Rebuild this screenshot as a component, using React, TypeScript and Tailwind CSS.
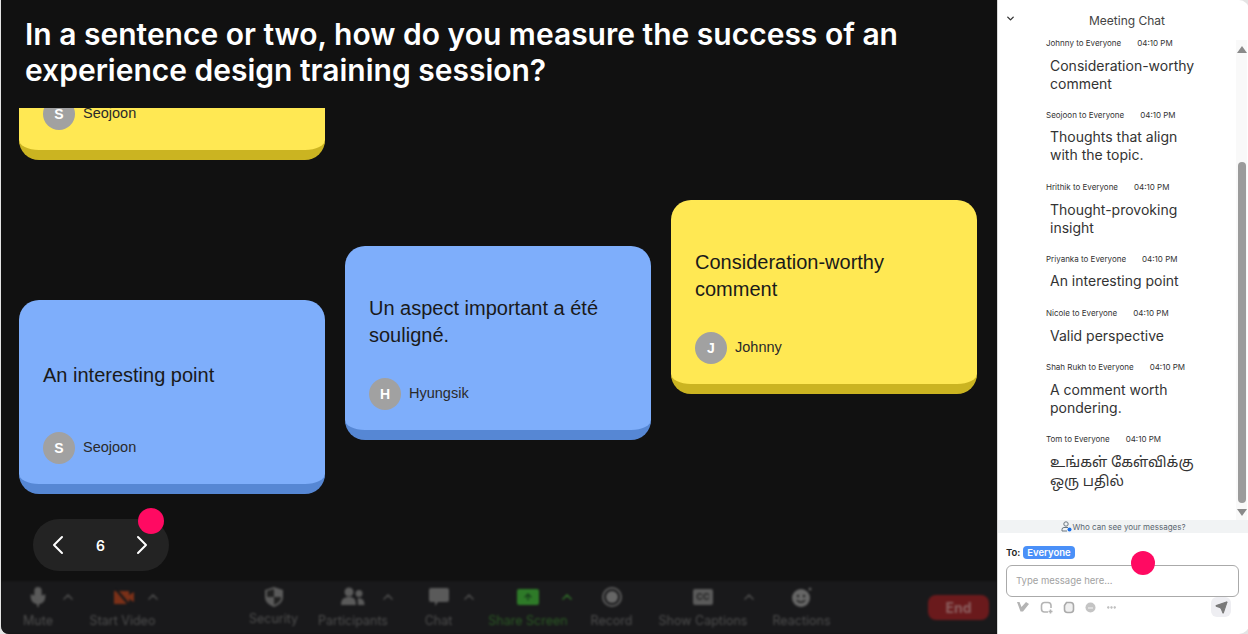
import React from 'react';
import { ChevronDown, ChevronLeft, ChevronRight, ChevronUp, Mic, Send, MoreHorizontal, ArrowUp } from 'lucide-react';

const font = "font-['Inter',sans-serif]";

const Card = ({ text, name, color, className = '', textClass = 'pt-[20px]' }: { text: string; name: string; color: 'blue' | 'yellow'; className?: string; textClass?: string }) => (
  <div
    className={`w-[306px] h-[194px] shrink-0 rounded-[20px] border-b-[10px] px-6 flex flex-col font-['Liberation_Sans',sans-serif] ${
      color === 'blue' ? 'bg-[#7eaefb] border-[#5687d4]' : 'bg-[#ffe853] border-[#cbb421]'
    } ${className}`}
  >
    <div className={`flex-1 flex items-center text-[20px] leading-[27px] text-[#1a1a1a] ${textClass}`}>{text}</div>
    <div className="flex items-center gap-[8px] mb-[20px]">
      <div className="w-8 h-8 rounded-full bg-[#a1a1a1] text-white font-bold text-[14px] flex items-center justify-center">{name[0]}</div>
      <span className="text-[14.5px] text-[#2a2a2a] -mt-[1px]">{name}</span>
    </div>
  </div>
);

const Tool = ({ icon, label, caret = '', className = '', labelClass = 'mt-[3px]', green }: { icon: React.ReactNode; label: string; caret?: string; className?: string; labelClass?: string; green?: boolean }) => (
  <div className={`relative flex flex-col items-center ${className}`}>
    <div className="h-[26px] flex items-center justify-center">{icon}</div>
    <span className={`text-[12.5px] leading-[16px] whitespace-nowrap ${labelClass} ${green ? 'text-[#2b5a24]' : 'text-[#4e4e4e]'}`}>{label}</span>
    {caret && <ChevronUp size={16} strokeWidth={2.5} className={`absolute top-[5px] ${caret} ${green ? 'text-[#2f6a28]' : 'text-[#4a4a4a]'}`} />}
  </div>
);

const messages = [
  { from: 'Johnny', text: 'Consideration-worthy comment', spacing: 'gap-[9px]' },
  { from: 'Seojoon', text: 'Thoughts that align with the topic.', spacing: 'gap-[8px] mb-[1px]' },
  { from: 'Hrithik', text: 'Thought-provoking insight', spacing: 'gap-[9px]' },
  { from: 'Priyanka', text: 'An interesting point', spacing: 'gap-[8px] mb-[1px]' },
  { from: 'Nicole', text: 'Valid perspective', spacing: 'gap-[9px]' },
  { from: 'Shah Rukh', text: 'A comment worth pondering.', spacing: 'gap-[9px]' },
];

const SmallIcons = () => (
  <>
    <svg width="14" height="12" viewBox="0 0 14 12" fill="#b4b4b4"><path d="M1 1h2.500l2 5L10 1l3 2-6 7.500H4.500z" /></svg>
    <svg width="13" height="13" viewBox="0 0 13 13" fill="none" stroke="#b4b4b4" strokeWidth="1.600"><path d="M8 11H4.500A3 3 0 0 1 1.500 8V4.500a3 3 0 0 1 3-3H8a3 3 0 0 1 3 3V7" /><path d="M10.500 8.500v4M8.500 10.500h4" /></svg>
    <svg width="13" height="13" viewBox="0 0 13 13" fill="#f0f0f0" stroke="#aaaaaa" strokeWidth="1.600"><path d="M4.500 1.500h4a3 3 0 0 1 3 3v4a3 3 0 0 1-3 3h-3a3 3 0 0 1-3-3v-4z" /></svg>
    <svg width="11" height="11" viewBox="0 0 11 11"><circle cx="5.500" cy="5.500" r="5" fill="#c4c4c4" /><path d="M3 6h5" stroke="#eeeeee" strokeWidth="1.200" /></svg>
    <MoreHorizontal size={11} strokeWidth={3} className="text-[#b4b4b4] ml-[1px]" />
  </>
);

const Chat = () => (
  <aside className={`relative w-[251px] shrink-0 bg-white flex flex-col rounded-r-[10px] ${font}`}>
    <div className="h-[36px] shrink-0 flex items-center pl-[7px] relative">
      <ChevronDown size={11} strokeWidth={3} className="text-[#333]" />
      <span className="absolute left-[91px] top-[13px] text-[12px] leading-[15px] text-[#444]">Meeting Chat</span>
    </div>
    <div className="flex-1 min-h-0 flex overflow-hidden">
      <div className="flex-1 pl-[48px] pr-[40px] pt-[2px] flex flex-col gap-[17px] overflow-hidden">
        {messages.map((m) => (
          <div key={m.from} className={`flex flex-col ${m.spacing}`}>
            <div className="flex gap-[16px] text-[8px] leading-[10px] text-[#333] whitespace-nowrap">
              <span>{m.from} to Everyone</span>
              <span>04:10 PM</span>
            </div>
            <div className="pl-[4px] text-[14px] leading-[18px] text-[#333]">{m.text}</div>
          </div>
        ))}
        <div className="flex flex-col gap-[10px]">
          <div className="flex gap-[16px] text-[8px] leading-[10px] text-[#333] whitespace-nowrap">
            <span>Tom to Everyone</span>
            <span>04:10 PM</span>
          </div>
          <div className="pl-[4px] text-[14.3px] leading-[19px] text-[#333] whitespace-nowrap font-['Noto_Sans_Tamil','Lohit_Tamil','Noto_Sans',sans-serif]">
            உங்கள் கேள்விக்கு<br />ஒரு பதில்
          </div>
        </div>
      </div>
      <div className="w-[11px] mr-[2px] shrink-0 bg-[#f9f9f9] flex flex-col items-center pt-[6px] pb-[4px] mt-[4px]">
        <svg width="10" height="7" viewBox="0 0 10 7" className="shrink-0"><path d="M5 0l5 7H0z" fill="#8a8a8a" /></svg>
        <div className="w-[8px] h-[341px] mt-[109px] rounded-full bg-[#9b9b9b]" />
        <svg width="10" height="7" viewBox="0 0 10 7" className="shrink-0 mt-auto"><path d="M5 7l5-7H0z" fill="#8a8a8a" /></svg>
      </div>
    </div>
    <div className="h-[13px] shrink-0 bg-[#f1f3f4] flex items-center justify-center text-[8px] text-[#5a6670]">
      <svg width="11" height="11" viewBox="0 0 11 11" fill="none" stroke="#6a7680" strokeWidth="1">
        <circle cx="5" cy="3" r="2.200" />
        <path d="M1 10V8.500A2 2 0 0 1 3 6.500h4" />
        <path d="M1 10h5" />
        <circle cx="8.500" cy="8.500" r="2" fill="#1a6fe8" stroke="none" />
      </svg>
      Who can see your messages?
    </div>
    <div className="h-[101px] shrink-0 pl-[8px] pr-[10px] pt-[13px] relative">
      <div className="flex items-center gap-[2px] text-[9.5px] leading-[13px] font-semibold text-[#222]">
        To:
        <span className="ml-[1px] bg-[#4a90f8] text-white rounded-[4px] px-[4px] text-[9.5px]">Everyone</span>
      </div>
      <div className="mt-[6px] h-[32px] border border-[#aaaaaa] rounded-[6px] flex items-center pl-[9px] text-[9.5px] text-[#a2a2a2]">Type message here...</div>
      <div className="flex items-center pl-[10px] gap-[9.500px] h-[20px]">
        <SmallIcons />
        <div className="ml-auto w-[20px] h-[20px] rounded-[6px] bg-[#eeeef2] flex items-center justify-center mr-[8px]">
          <Send size={13} className="text-[#7a7a7a] fill-[#7a7a7a]" />
        </div>
      </div>
      <div className="absolute left-[133px] top-[18px] w-[24px] h-[24px] rounded-full bg-[#ff0a62]" />
    </div>
  </aside>
);

export default function App() {
  return (
    <div className={`w-[1248px] h-[634px] overflow-hidden bg-[#e4e4e4] flex ${font}`}>
      <main className="relative w-[996px] ml-px shrink-0 bg-[#111111] flex flex-col overflow-hidden rounded-bl-[8px]">
        <h1 className="h-[108px] shrink-0 pt-[16px] pl-6 text-[30px] leading-[36px] font-semibold text-white bg-[#111111] z-10">
          In a sentence or two, how do you measure the success of an<br />experience design training session?
        </h1>
        <div className="flex-1 min-h-0 flex gap-5 pl-[18px] overflow-hidden">
          <div className="flex flex-col">
            <Card text="" name="Seojoon" color="yellow" className="-mt-[142px]" />
            <Card text="An interesting point" name="Seojoon" color="blue" className="mt-[140px] h-[193px]" textClass="pt-[18px]" />
          </div>
          <Card text="Un aspect important a été souligné." name="Hyungsik" color="blue" className="mt-[138px]" />
          <Card text="Consideration-worthy comment" name="Johnny" color="yellow" className="mt-[92px]" />
        </div>
        <div className="absolute left-[32px] top-[519px] w-[136px] h-[52px] rounded-full bg-[#232323] flex items-center justify-between pl-[9px] pr-[11px] text-white">
          <ChevronLeft size={32} strokeWidth={1.5} />
          <span className="text-[14px] font-semibold ml-[1px]">6</span>
          <ChevronRight size={32} strokeWidth={1.5} />
          <span className="absolute left-[105px] -top-[11px] w-[26px] h-[26px] rounded-full bg-[#ff0a62]" />
        </div>
        <footer className="h-[53px] shrink-0 bg-[#19191b] z-10 flex items-start pt-[3px] blur-[1.2px]">
          <Tool icon={<Mic size={22} className="text-[#5a5a5a] fill-[#5a5a5a]" />} label="Mute" caret="-right-[25px]" className="ml-[24px] w-[26px]" />
          <Tool
            icon={
              <svg width="24" height="22" viewBox="0 0 24 22">
                <path d="M3 5h15v13H3z" fill="#7a3018" />
                <path d="M18 9l5-3v10l-5-3z" fill="#7a3018" />
                <path d="M3 1l17 20" stroke="#19191b" strokeWidth="2.500" />
              </svg>
            }
            label="Start Video"
            caret="-right-[6px]"
            className="ml-[39px] w-[65px]"
          />
          <Tool
            icon={
              <svg width="20" height="22" viewBox="0 0 20 22">
                <path d="M10 1l9 3v7c0 5-4 8-9 10-5-2-9-5-9-10V4z" fill="#5a5a5a" />
                <path d="M10 3v8H3V5zM10 11h7c0 4-3 6-7 8z" fill="#222" />
              </svg>
            }
            label="Security"
            labelClass="mt-[1px]"
            className="ml-[95px] w-[47px]"
          />
          <Tool
            icon={
              <svg width="24" height="20" viewBox="0 0 24 20" fill="#5a5a5a">
                <circle cx="8" cy="5" r="4.500" />
                <circle cx="18" cy="6.500" r="3.500" />
                <path d="M0 18c0-6 3-8 8-8s7 2 7 8zM16.500 11.500c4-.8 7 1 7 6.500h-6.500c0-3-.2-5-.5-6.500z" />
              </svg>
            }
            label="Participants"
            caret="-right-[8px]"
            className="ml-[21px] w-[70px]"
          />
          <Tool
            icon={
              <svg width="22" height="20" viewBox="0 0 22 20" fill="#5a5a5a">
                <path d="M3 1h16a2 2 0 0 1 2 2v10a2 2 0 0 1-2 2h-9l-3 4v-4H3a2 2 0 0 1-2-2V3a2 2 0 0 1 2-2z" />
              </svg>
            }
            label="Chat"
            caret="-right-[24px]"
            className="ml-[36px] w-[29px]"
          />
          <Tool
            green
            icon={<span className="w-[22px] h-[16px] rounded-[2px] bg-[#2e7a28] flex items-center justify-center"><ArrowUp size={10} strokeWidth={3} className="text-[#14351a]" /></span>}
            label="Share Screen"
            caret="-right-[8px]"
            className="ml-[36px] w-[78px]"
          />
          <Tool
            icon={<span className="w-[20px] h-[20px] rounded-full border-[2px] border-[#5a5a5a] p-[2px] block"><span className="block w-full h-full rounded-full bg-[#666666]" /></span>}
            label="Record"
            className="ml-[24px] w-[41px]"
          />
          <Tool
            icon={<span className="w-[20px] h-[16px] rounded-[2px] bg-[#5a5a5a] text-[#222] text-[9px] font-bold flex items-center justify-center">CC</span>}
            label="Show Captions"
            caret="-right-[10px]"
            className="ml-[27px] w-[88px]"
          />
          <Tool
            icon={
              <svg width="22" height="22" viewBox="0 0 22 22">
                <circle cx="10" cy="12" r="9" fill="#666666" />
                <circle cx="7" cy="10" r="1.200" fill="#222" />
                <circle cx="13" cy="10" r="1.200" fill="#222" />
                <path d="M6 14c2 3 6 3 8 0" stroke="#222" strokeWidth="1.400" fill="none" />
                <circle cx="19" cy="3" r="1.500" fill="#5a5a5a" />
              </svg>
            }
            label="Reactions"
            className="ml-[26px] w-[57px]"
          />
          <div className="ml-[98px] mt-[11px] w-[61px] h-[25px] rounded-[8px] bg-[#6a1a1c] flex items-center justify-center text-[14px] font-bold text-[#8c6060]">End</div>
        </footer>
      </main>
      <div className="w-px shrink-0 bg-[#d8d8d8]" />
      <Chat />
    </div>
  );
}
